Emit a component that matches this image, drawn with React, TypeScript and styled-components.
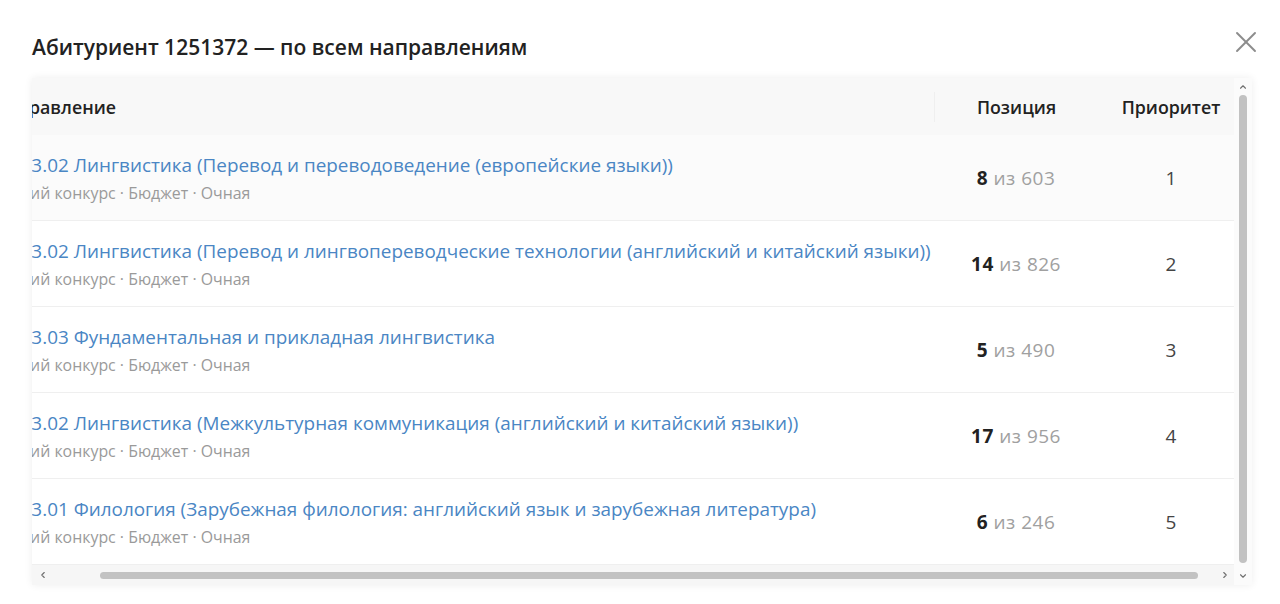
import React, { useLayoutEffect, useRef } from "react";
import styled, { createGlobalStyle } from "styled-components";
import { X, ChevronLeft, ChevronRight, ChevronUp, ChevronDown } from "lucide-react";

const GlobalStyle = createGlobalStyle`
  html, body { margin: 0; padding: 0; background: #ffffff; }
  body { font-family: "Open Sans", "Noto Sans", Arial, sans-serif; color: #222; }
  * { box-sizing: border-box; }
`;

const Modal = styled.div`
  width: 1280px;
  height: 604px;
  padding: 28px 28px 0 32px;
  display: flex;
  flex-direction: column;
  background: #fff;
`;

const TopBar = styled.div`
  display: flex;
  align-items: flex-start;
  justify-content: space-between;
  height: 50px;
`;

const Title = styled.h2`
  margin: 5px 0 0;
  font-size: 21px;
  font-weight: 600;
  color: #222;
`;

const CloseButton = styled.button`
  border: none;
  background: none;
  padding: 0;
  margin-top: -4px;
  margin-right: -12px;
  color: #8c8c8c;
  display: flex;
  cursor: pointer;
`;

const Frame = styled.div`
  width: 1220px;
  height: 507px;
  display: grid;
  grid-template-columns: 1fr 18px;
  grid-template-rows: 1fr 20px;
  box-shadow: 0 0 8px rgba(0, 0, 0, 0.07);
  background: #fff;
`;

const Viewport = styled.div`
  grid-row: 1;
  grid-column: 1;
  overflow: hidden;
`;

const Table = styled.div`
  width: 1270px;
  padding-bottom: 24px;
`;

const Row = styled.div<{ $head?: boolean; $hover?: boolean }>`
  display: grid;
  grid-template-columns: 960px 164px 146px;
  align-items: center;
  height: ${(p) => (p.$head ? "57px" : "86px")};
  background: ${(p) => (p.$head ? "#f8f8f8" : p.$hover ? "#fbfbfb" : "#fff")};
  border-bottom: ${(p) => (p.$head ? "none" : "1px solid #efefef")};
`;

const HeadCell = styled.div<{ $center?: boolean; $divider?: boolean }>`
  font-size: 17.8px;
  font-weight: 600;
  color: #222;
  padding-left: ${(p) => (p.$center ? "0" : "20px")};
  text-align: ${(p) => (p.$center ? "center" : "left")};
  height: 30px;
  line-height: 30px;
  border-left: ${(p) => (p.$divider ? "1px solid #efefef" : "none")};
`;

const DirCell = styled.div`
  padding-left: 20px;
  display: flex;
  flex-direction: column;
  gap: 6px;
`;

const DirLink = styled.a`
  font-size: 18.9px;
  line-height: 24px;
  color: #4a86c4;
  text-decoration: none;
  white-space: nowrap;
`;

const DirMeta = styled.div`
  font-size: 15.9px;
  line-height: 20px;
  color: #9a9a9a;
`;

const PosCell = styled.div`
  text-align: center;
  font-size: 19px;
  letter-spacing: 0.5px;
  color: #a0a0a0;
  strong {
    color: #222;
    font-weight: 700;
  }
`;

const PrioCell = styled.div`
  text-align: center;
  font-size: 19px;
  color: #444;
`;

const VBar = styled.div`
  grid-row: 1 / 3;
  grid-column: 2;
  display: flex;
  flex-direction: column;
  align-items: center;
  background: #fbfbfb;
  color: #6f6f6f;
`;

const HBar = styled.div`
  grid-row: 2;
  grid-column: 1;
  display: flex;
  align-items: center;
  background: #f6f6f6;
  color: #6f6f6f;
`;

const Arrow = styled.div`
  flex: 0 0 18px;
  height: 18px;
  width: 18px;
  display: flex;
  align-items: center;
  justify-content: center;
`;

const Track = styled.div<{ $vertical?: boolean }>`
  flex: 1;
  display: flex;
  flex-direction: ${(p) => (p.$vertical ? "column" : "row")};
  align-items: center;
`;

const Thumb = styled.div<{ $vertical?: boolean }>`
  background: #c2c2c2;
  border-radius: 4px;
  ${(p) => (p.$vertical ? "width: 8px;" : "height: 7px;")}
`;

const rows = [
  { name: "45.03.02 Лингвистика (Перевод и переводоведение (европейские языки))", pos: 8, of: 603, prio: 1 },
  { name: "45.03.02 Лингвистика (Перевод и лингвопереводческие технологии (английский и китайский языки))", pos: 14, of: 826, prio: 2 },
  { name: "45.03.03 Фундаментальная и прикладная лингвистика", pos: 5, of: 490, prio: 3 },
  { name: "45.03.02 Лингвистика (Межкультурная коммуникация (английский и китайский языки))", pos: 17, of: 956, prio: 4 },
  { name: "45.03.01 Филология (Зарубежная филология: английский язык и зарубежная литература)", pos: 6, of: 246, prio: 5 },
];

export default function App() {
  const ref = useRef<HTMLDivElement>(null);
  useLayoutEffect(() => {
    if (ref.current) ref.current.scrollLeft = 58;
  }, []);
  return (
    <>
      <GlobalStyle />
      <Modal>
        <TopBar>
          <Title>Абитуриент 1251372 — по всем направлениям</Title>
          <CloseButton aria-label="Закрыть">
            <X size={36} strokeWidth={1.25} />
          </CloseButton>
        </TopBar>
        <Frame>
          <Viewport ref={ref}>
            <Table>
              <Row $head>
                <HeadCell>Направление</HeadCell>
                <HeadCell $center $divider>Позиция</HeadCell>
                <HeadCell $center>Приоритет</HeadCell>
              </Row>
              {rows.map((r, i) => (
                <Row key={i} $hover={i === 0}>
                  <DirCell>
                    <DirLink href="#">{r.name}</DirLink>
                    <DirMeta>Общий конкурс · Бюджет · Очная</DirMeta>
                  </DirCell>
                  <PosCell>
                    <strong>{r.pos}</strong> из {r.of}
                  </PosCell>
                  <PrioCell>{r.prio}</PrioCell>
                </Row>
              ))}
            </Table>
          </Viewport>
          <VBar>
            <Arrow><ChevronUp size={10} strokeWidth={2.6} /></Arrow>
            <Track $vertical>
              <Thumb $vertical style={{ height: "468px", marginTop: "-1px" }} />
            </Track>
            <Arrow><ChevronDown size={10} strokeWidth={2.6} /></Arrow>
          </VBar>
          <HBar>
            <Arrow style={{ marginLeft: "2px" }}><ChevronLeft size={10} strokeWidth={2.6} /></Arrow>
            <Track>
              <Thumb style={{ width: "1098px", marginLeft: "48px" }} />
            </Track>
            <Arrow><ChevronRight size={10} strokeWidth={2.6} /></Arrow>
          </HBar>
        </Frame>
      </Modal>
    </>
  );
}
